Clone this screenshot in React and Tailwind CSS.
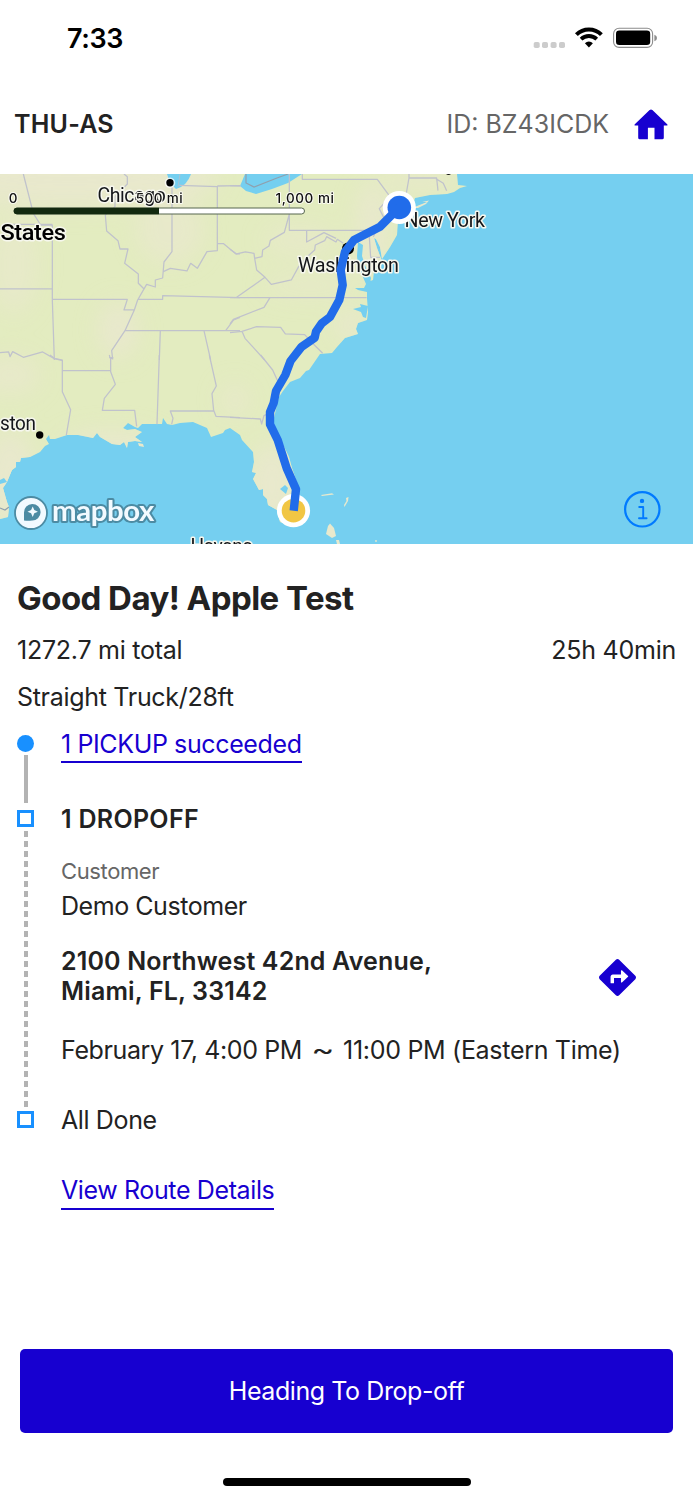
import { FaDirections } from 'react-icons/fa';

const stateBorders = [
  'M70 12L100 130L122 165H157V390L163 570M38 163H157M0 357H157M157 388H382L372 420H403L413 390L433 355L440 343L466 351V330L488 324L492 276L516 245V50M372 12L382 20V42L345 80V110L316 135L320 183L354 212L360 237H384L374 280L415 312V340L433 358M538 46L652 50V242L621 245L592 295L572 280L561 303L511 295L490 305M652 48L720 47M413 388H488V377L720 383M652 221H671L708 252H720M403 420L375 482L335 542L338 567L328 562M375 482H720M481 482L478 570M612 482L632 570M677 482L701 450L720 442',
  'M0 548L26 546L30 560L38 545L70 562L128 546L163 566L188 572'
];

const coastBorders = [
  'M150 0L163 10L187 15V110L212 164L199 240M187 47H332M332 10V50L346 88L313 130L307 166H404L410 214M328 0L330 8H340M478 0L471 208M628 0L649 93L636 116L641 166L648 184L720 188M641 168H511L519 190L515 208'
];

const eastBorders = [
  'M178 12V181H428M0 47L32 48M217 12V28H442L480 80L448 116L460 140L478 153M537 12V24H620L624 62M618 26L640 40L650 62M537 24L528 75M178 132L163 187L121 211L117 228L98 240L96 260L74 265L72 250L46 246L20 252L0 238M74 265L80 300L105 322L20 382M105 322L124 343L184 330L206 290L230 262L254 240L256 225L284 212L290 200L318 216L322 208L340 220M230 182V216L282 188L318 205M0 383H410M418 200L422 262H450M430 200L445 170M120 383L102 412L10 448L0 462M0 488L36 484L80 470L152 472L166 492L224 494L250 522L278 550M36 484L45 505L104 570'
];

const southBorders = ['M92 0L128 45L143 78M0 187L91 192L95 207L102 182L110 178'];

const route =
  'M399.3 207.3L380 226.7L354 240L345 251.7L340.7 270L342.7 285L339.3 300L330 317L321.7 323.3L316 331.7L314.7 337.7L301.7 346.7L290.5 361L285.3 375L276 391L273.7 403L270 412V424.3L277.7 440L286.7 468.3L296 489.3L293.7 510.7';

const StatusBar = () => (
  <div className="flex h-[76px] items-center justify-between pl-[67px] pr-[35px]">
    <span className="pt-[2px] text-[27px] font-semibold leading-[30px] text-black">7:33</span>
    <svg width="126" height="24" viewBox="532 26 126 24">
      <g fill="#cccccc">
        <rect x="533.7" y="42" width="6" height="6" rx="1.8" />
        <rect x="542" y="42" width="6" height="6" rx="1.8" />
        <rect x="550.6" y="42" width="6" height="6" rx="1.8" />
        <rect x="559" y="42" width="6" height="6" rx="1.8" />
      </g>
      <g transform="translate(588.9 47.5) scale(.3333)">
        <path d="M-37.5 -38.5A53 53 0 0 1 37.5 -38.5" fill="none" stroke="#000" strokeWidth="12" />
        <path d="M-23.5 -25A34 34 0 0 1 23.5 -25" fill="none" stroke="#000" strokeWidth="11.5" />
        <path d="M0 0L-12 -13A17 17 0 0 1 12 -13Z" />
      </g>
      <rect x="613.6" y="28.2" width="39" height="19.2" rx="5.5" fill="none" stroke="#8c8c8c" strokeWidth="1.1" />
      <rect x="616" y="30.6" width="34.2" height="14.4" rx="3.3" />
      <path d="M654.4 34.7Q657 35.8 657 37.9T654.4 41.2Z" fill="#8c8c8c" />
    </svg>
  </div>
);

const Header = () => (
  <div className="flex h-[98px] items-center justify-between pb-[2px] pl-[14px] pr-[25px]">
    <span className="text-[25px] font-semibold leading-[30px] tracking-[0.2px]">THU-AS</span>
    <div className="flex items-center gap-[25px]">
      <span className="text-[25px] leading-[30px] text-[#666666]">ID: BZ43ICDK</span>
      <svg width="34" height="31" viewBox="0 0 34 31" fill="#1700d0">
        <path d="M15.6 1.1Q17 -.3 18.4 1.1L33.2 15.2Q34.1 16.6 32.6 16.6H29.8V28.8Q29.8 30.3 28.3 30.3H20.5V18.7H13.9V30.3H5.7Q4.2 30.3 4.2 28.8V16.6H1.4Q-.1 16.6 .8 15.2Z" />
      </svg>
    </div>
  </div>
);

const RouteMap = () => (
  <div className="h-[370px] overflow-hidden bg-[#75cff0]">
    <svg className="block" width="693" height="370" viewBox="0 174 693 370">
      <defs>
        <filter id="soft" x="-50%" y="-50%" width="200%" height="200%">
          <feGaussianBlur stdDeviation="11" />
        </filter>
        <clipPath id="land">
          <path d="M0 174H457L458 185L467 186L460 188L454 192L447 194L430 195L415 198L412 208L398 220L397 235L390 247L382 259L380 247L376 239L374 238L377 248L382 261L374 270L373 280L367 282L367 292L367 298L368 312L367 320L358 323L356 329L358 334L345 338L337 347L332 353L320 354L309 370L306 371L300 378L290 382L283 391L279 397L277 405L273 422L280 438L289 457L292 468L299 488L300 502L293 515L283 523L280 522L277 510L268 505L267 499L263 495L263 489L259 490L253 479L256 473L252 472L254 462L253 452L242 440L240 435L230 428L225 430L223 433L211 437L207 428L193 422L180 423L172 425L167 424L163 418L162 424L142 424L138 428L135 427L128 423L123 428L127 430L135 429L142 432L135 437L142 442L135 441L128 442L127 448L124 442L120 445L112 444L100 437L97 433L93 438L78 435L67 435L55 439L50 439L49 435L46 439L49 444L45 446L40 452L30 457L21 458L20 462L16 462L16 467L12 470L7 482L3 488L7 502L9 507L8 517L0 519Z" />
        </clipPath>
      </defs>

      {/* Land */}
      <g clipPath="url(#land)">
        <rect x="0" y="174" width="480" height="370" fill="#e3ecc0" />
        <g fill="#e8e8cc" filter="url(#soft)">
          <ellipse cx="70" cy="180" rx="150" ry="28" />
          <ellipse cx="14" cy="265" rx="24" ry="50" opacity=".7" />
          <ellipse cx="170" cy="230" rx="34" ry="34" opacity=".8" />
          <ellipse cx="118" cy="330" rx="20" ry="28" />
          <ellipse cx="10" cy="375" rx="30" ry="20" opacity=".8" />
          <ellipse cx="10" cy="480" rx="26" ry="50" />
          <ellipse cx="112" cy="445" rx="50" ry="14" />
          <ellipse cx="272" cy="485" rx="24" ry="42" />
          <ellipse cx="310" cy="285" rx="46" ry="12" opacity=".6" />
          <ellipse cx="372" cy="230" rx="16" ry="50" />
          <ellipse cx="300" cy="240" rx="36" ry="14" opacity=".7" />
          <ellipse cx="235" cy="400" rx="14" ry="16" opacity=".8" />
          <ellipse cx="420" cy="180" rx="40" ry="8" />
          <ellipse cx="350" cy="325" rx="14" ry="16" />
        </g>
      </g>

      {/* Islands */}
      <g fill="#e8e9cd">
        <path d="M412 208L427 202L422 202L429 200.500L426 204L418 208Z" />
        <path d="M321 495L332 493.300L334 494.500L322 496Z" />
        <path d="M346 498L348.500 497L348 501L344.500 507L344 505L346.500 501Z" />
        <path d="M330 523.500L334 528L336 536L332 538L326 534L328 526Z" />
        <path d="M336 540L339 540L340 544H337Z" />
        <circle cx="376" cy="541" r=".9" />
        <path d="M138 443L143 444L144 447L139 446Z" />
      </g>

      {/* Lakes and bays */}
      <g fill="#75cff0">
        <path d="M167 174H191Q187 186 176 189L170 183Z" />
        <path d="M245 174H302L288 183L272 189L256 194L246 191L240 186Z" />
        <path d="M358 242L363 245L362 256L366 268L371 278L369 290L367 292L358 290L355 288L364 288L366 284L358 266L357 256Z" />
        <path d="M353 309L361 307L360 304L368 306L366 318L363 317L361 312Z" />
        <path d="M280 489L285 485L288 488L286 494Z" />
        <circle cx="98.500" cy="440" r="2" />
        <path d="M0 480L4 478L7 482L0 484Z" />
      </g>

      {/* State borders */}
      <g fill="none" stroke="#c0c2cc" strokeWidth="3.8" strokeLinejoin="round">
        <g transform="translate(0 170) scale(.3333)">
          {stateBorders.map((d) => <path key={d} d={d} />)}
        </g>
        <g transform="translate(0 355) scale(.3333)">
          {coastBorders.map((d) => <path key={d} d={d} />)}
        </g>
        <g transform="translate(230 170) scale(.3333)">
          {eastBorders.map((d) => <path key={d} d={d} />)}
        </g>
        <g transform="translate(230 355) scale(.3333)">
          {southBorders.map((d) => <path key={d} d={d} />)}
        </g>
      </g>
      <path d="M246 174V183L254 187L277 178L288 174M0 508L5 510L9 507" fill="none" stroke="#8fa0ae" strokeWidth="1.2" />
      <path d="M178 187L180 174" fill="none" stroke="#a5c3d6" strokeWidth="1" />

      {/* Place names */}
      <circle cx="170" cy="182.700" r="5.300" fill="#fff" opacity=".7" />
      <circle cx="170" cy="182.700" r="3.700" />
      <circle cx="39.700" cy="435" r="3.700" />
      <circle cx="348" cy="248.500" r="6" />
      <g
        className="font-['Roboto',sans-serif] text-[19.5px]"
        fill="#14161a"
        stroke="#f6f7ee"
        strokeWidth="3"
        strokeLinejoin="round"
        paintOrder="stroke"
      >
        <text x="97.500" y="201.700" textLength="68" lengthAdjust="spacingAndGlyphs">Chicago</text>
        <text x="404.500" y="227.300" textLength="80" lengthAdjust="spacingAndGlyphs">New York</text>
        <text x="298" y="272.300" textLength="100.500" lengthAdjust="spacingAndGlyphs">Washington</text>
        <text x="0" y="429.500" textLength="35.500" lengthAdjust="spacingAndGlyphs">ston</text>
        <text x="190.500" y="553" textLength="62" lengthAdjust="spacingAndGlyphs">Havana</text>
        <text x="0.500" y="239.500" textLength="65" lengthAdjust="spacingAndGlyphs" className="text-[22px] font-medium" fill="#000">States</text>
      </g>
      <path d="M446 174Q448.500 176 451 174Z" fill="#111" />

      {/* Scale bar */}
      <rect x="14" y="208" width="290.500" height="6" rx="3" fill="#fff" stroke="#56664e" strokeWidth="1" />
      <path d="M159 207.700V214.300H17A3.300 3.300 0 0 1 17 207.700Z" fill="#12290f" />
      <g
        className="font-['Inter',sans-serif] text-[13.5px] font-medium"
        fill="#111"
        stroke="#fafaf3"
        strokeWidth="2"
        strokeLinejoin="round"
        paintOrder="stroke"
      >
        <text x="8.800" y="202.500">0</text>
        <text x="135.800" y="202.500" textLength="46.500">500 mi</text>
        <text x="275.500" y="202.500" textLength="58">1,000 mi</text>
      </g>

      {/* Route */}
      <circle cx="399.300" cy="207.500" r="16.600" fill="#fff" />
      <circle cx="399.300" cy="207.500" r="11.800" fill="#216cea" />
      <circle cx="293.500" cy="510.700" r="16.600" fill="#fff" />
      <circle cx="293.500" cy="510.700" r="11.800" fill="#f1c644" />
      <path d={route} fill="none" stroke="#216cea" strokeWidth="8.400" strokeLinejoin="round" />

      {/* Attribution */}
      <circle cx="31" cy="513" r="16" fill="#f2faff" stroke="#4c8ba3" strokeWidth="1.800" />
      <path d="M24 520.500V512.500A8.300 8.300 0 1 1 32 520.500Q28 521 24 520.500Z" fill="#4c8ba3" />
      <path d="M32.700 506.500L34.300 510.100L37.900 511.700L34.300 513.300L32.700 516.900L31.100 513.300L27.500 511.700L31.100 510.100Z" fill="#f2faff" />
      <text
        x="52"
        y="520.500"
        textLength="102"
        lengthAdjust="spacingAndGlyphs"
        className="font-['Lato',sans-serif] text-[28px] font-bold"
        fill="#f2faff"
        stroke="#4c8ba3"
        strokeWidth="4"
        strokeLinejoin="round"
        paintOrder="stroke"
      >
        mapbox
      </text>
      <g fill="none" stroke="#007aff" strokeWidth="2.200" strokeLinecap="round" strokeLinejoin="round">
        <circle cx="642.300" cy="509.300" r="17.200" />
        <path d="M639.200 507H643.200V518.200M639 518.200H646.600" strokeWidth="1.900" />
      </g>
      <circle cx="642" cy="500.900" r="2.200" fill="#007aff" />
    </svg>
  </div>
);

const SquareMarker = () => <div className="h-[17px] w-[17px] border-[3px] border-[#1890ff]" />;

export default function App() {
  return (
    <div className="flex h-[1500px] w-[693px] flex-col overflow-hidden bg-white font-['Inter',sans-serif] text-[25px] leading-[30px] tracking-[-0.38px] text-[#222222]">
      <StatusBar />
      <div className="tracking-normal">
        <Header />
      </div>
      <RouteMap />

      {/* Trip summary */}
      <div className="px-[17px] pt-[34px]">
        <h1 className="text-[33px] font-bold leading-[40px] tracking-[-0.55px]">Good Day! Apple Test</h1>
        <div className="mt-[17px] flex justify-between tracking-[-0.25px]">
          <span>1272.7 mi total</span>
          <span>25h 40min</span>
        </div>
        <p className="mt-[17px] tracking-[-0.3px]">Straight Truck/28ft</p>
      </div>

      {/* Stops */}
      <div className="mt-[16px] pl-[17px]">
        <div className="flex h-[75px] gap-[27px]">
          <div className="flex w-[17px] flex-col items-center pt-[7px]">
            <div className="h-[17px] w-[17px] rounded-full bg-[#1890ff]" />
            <div className="mt-[3px] h-[48px] w-[4px] bg-[#b3b3b3]" />
          </div>
          <a className="h-[35px] border-b-2 border-[#1700d0] pt-[1px] text-[#1700d0]">1 PICKUP succeeded</a>
        </div>

        <div className="flex h-[302px] gap-[27px]">
          <div className="flex w-[17px] flex-col items-center pt-[7px]">
            <SquareMarker />
            <div className="-mb-[3px] mt-[4px] w-[4px] flex-1 bg-[repeating-linear-gradient(to_bottom,#b3b3b3_0px,#b3b3b3_6px,transparent_6px,transparent_10px)]" />
          </div>
          <div className="flex-1 pt-[1px]">
            <p className="font-semibold tracking-[0.3px]">1 DROPOFF</p>
            <p className="mt-[24px] text-[22px] leading-[26px] text-[#666666]">Customer</p>
            <p className="mt-[7px] tracking-[-0.45px]">Demo Customer</p>
            <div className="mt-[25px] flex items-center justify-between pr-[57px]">
              <p className="font-semibold tracking-[0.16px]">
                2100 Northwest 42nd Avenue,
                <br />
                Miami, FL, 33142
              </p>
              <FaDirections className="mt-[3px] h-[37px] w-[37px] text-[#1700d0]" />
            </div>
            <p className="mt-[29px] flex whitespace-nowrap">
              February 17, 4:00 PM
              <span className="w-[41px] scale-x-140 text-center">~</span>
              <span className="tracking-[-0.3px]">11:00 PM (Eastern Time)</span>
            </p>
          </div>
        </div>

        <div className="flex gap-[27px]">
          <div className="w-[17px] pt-[6px]">
            <SquareMarker />
          </div>
          <p>All Done</p>
        </div>
        <div className="mt-[40px] flex pl-[44px]">
          <a className="h-[35px] border-b-2 border-[#1700d0] text-[#1700d0]">View Route Details</a>
        </div>
      </div>

      <div className="mt-auto px-[20px]">
        <button className="h-[84px] w-full rounded-[5px] bg-[#1700d0] tracking-[-0.42px] text-white">
          Heading To Drop-off
        </button>
      </div>
      <div className="mx-auto mb-[14px] mt-[45px] h-[8px] w-[248px] rounded-full bg-black" />
    </div>
  );
}
